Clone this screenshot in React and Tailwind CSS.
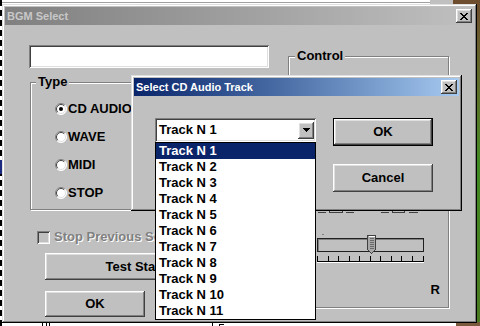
const RAISED = "bg-[#c0c0c0] shadow-[inset_-1px_-1px_#404040,inset_1px_1px_#fff,inset_-2px_-2px_#808080,inset_2px_2px_#dfdfdf]";
const FRAME = "bg-[#c0c0c0] shadow-[inset_-1px_-1px_#000,inset_1px_1px_#dfdfdf,inset_-2px_-2px_#808080,inset_2px_2px_#fff]";
const SUNKEN = "shadow-[inset_1px_1px_#808080,inset_-1px_-1px_#fff,inset_2px_2px_#404040,inset_-2px_-2px_#dfdfdf]";

function CloseBtn() {
  return (
    <div className={`w-[16px] h-[14px] flex items-center justify-center ${RAISED}`}>
      <svg width="8" height="7" viewBox="0 0 8 7" shapeRendering="crispEdges">
        <path d="M0 0h2v1h-2zM6 0h2v1h-2zM1 1h2v1h-2zM5 1h2v1h-2zM2 2h4v1h-4zM3 3h2v1h-2zM2 4h4v1h-4zM1 5h2v1h-2zM5 5h2v1h-2zM0 6h2v1h-2zM6 6h2v1h-2z" fill="#000" />
      </svg>
    </div>
  );
}

function Radio({ checked, label }) {
  return (
    <div className="flex items-center h-[14px] gap-[1px]">
      <svg width="12" height="12" viewBox="0 0 12 12">
        <circle cx="6" cy="6" r="5.5" fill="#fff" />
        <path d="M2.1 9.9 A5.5 5.5 0 0 1 9.9 2.1" stroke="#808080" fill="none" />
        <path d="M2.1 9.9 A5.5 5.5 0 0 0 9.9 2.1" stroke="#fff" fill="none" />
        <path d="M2.8 9.2 A4.5 4.5 0 0 1 9.2 2.8" stroke="#404040" fill="none" />
        <path d="M2.8 9.2 A4.5 4.5 0 0 0 9.2 2.8" stroke="#dfdfdf" fill="none" />
        {checked && <circle cx="6" cy="6" r="2" fill="#000" />}
      </svg>
      <span className="leading-[14px]">{label}</span>
    </div>
  );
}

function Ticks() {
  const xs = Array.from({ length: 11 }, (_, i) => Math.round(i * 10.55) + 0.5);
  return (
    <svg width="107" height="7" viewBox="0 0 107 7" shapeRendering="crispEdges">
      {xs.map((x) => (
        <line key={x} x1={x} y1="0" x2={x} y2="5" stroke="#000" />
      ))}
      <line x1="0" y1="5.5" x2="107" y2="5.5" stroke="#000" />
      <line x1="0" y1="6.5" x2="107" y2="6.5" stroke="#fff" />
    </svg>
  );
}

function Thumb() {
  return (
    <svg width="10" height="19" viewBox="0 0 10 19" shapeRendering="crispEdges">
      <path d="M0.5 0.5 H8.5 V14.5 L4.5 18.5 L0.5 14.5 Z" fill="#a8a8a8" stroke="#404040" />
      <path d="M1.5 1.5 H7.5" stroke="#fff" />
      {[3, 5, 7, 9, 11, 13].map((y) => (
        <line key={y} x1="3" y1={y + 0.5} x2="7" y2={y + 0.5} stroke="#6a6a6a" />
      ))}
    </svg>
  );
}

export default function App() {
  const tracks = Array.from({ length: 11 }, (_, i) => `Track N ${i + 1}`);
  return (
    <div className="relative w-[480px] h-[326px] overflow-hidden bg-white font-['Liberation_Sans',Arial,sans-serif] text-[13px] font-bold text-black">
      {/* desktop background pieces */}
      <div className="absolute left-0 top-0 w-[480px] h-[4px] flex">
        <div className="w-[430px] h-[3px] bg-white border-b border-[#a0a0a0]" />
        <div className="w-[23px] h-[4px] bg-[#c0c0c0]" />
        <div className="flex-1 h-[4px] bg-[#6e4c2e]" />
      </div>
      <div className="absolute left-0 top-0 h-[326px] w-[2px] border-l-2 border-dashed border-black" />
      <div className="absolute left-0 top-[160px] h-[14px] w-[2px] bg-[#1b2a80]" />
      <div className="absolute right-0 top-0 h-[326px] w-[3px] bg-gradient-to-b from-[#6e4c2e] via-[#3f8a22] to-[#4a7a20]" />
      <div className="absolute left-[456px] bottom-0 w-[24px] h-[4px] bg-[#7a5a3c]" />
      <div className="absolute left-[40px] bottom-0 w-[400px] h-[3px] flex items-end gap-[2px]">
        <div className="w-[1px] h-[3px] bg-black ml-[2px]" />
        <div className="w-[1px] h-[3px] bg-black ml-[1px]" />
        <div className="w-[1px] h-[3px] bg-black" />
        <div className="w-[1px] h-[3px] bg-black ml-[160px]" />
        <div className="w-[5px] h-[2px] border-t border-l border-black ml-[4px]" />
      </div>

      {/* main window */}
      <div className={`absolute left-[2px] top-[4px] w-[475px] h-[319px] p-[3px] flex flex-col ${FRAME}`}>
        <div className="h-[18px] flex items-center justify-between bg-gradient-to-r from-[#808080] to-[#c0c0c0] pl-[2px] pr-[2px]">
          <span className="text-[11px] leading-[13px] text-[#c8c8c8]">BGM Select</span>
          <CloseBtn />
        </div>
        <div className="flex items-start pl-[24px] pt-[20px] gap-[19px]">
          {/* left column */}
          <div className="w-[240px] flex flex-col">
            <div className={`h-[23px] bg-white ${SUNKEN}`} />
            <fieldset className="ml-[1px] mt-[7px] h-[135px] border border-[#808080] shadow-[inset_1px_1px_#fff,1px_1px_#fff]">
              <legend className="ml-[5px] px-[2px] leading-[14px] bg-[#c0c0c0]">Type</legend>
              <div className="flex flex-col gap-[14px] pl-[24px] pt-[13px]">
                <Radio checked label="CD AUDIO" />
                <Radio label="WAVE" />
                <Radio label="MIDI" />
                <Radio label="STOP" />
              </div>
            </fieldset>
            <div className="mt-[19px] h-[16px] flex items-center gap-[4px] ml-[8px]">
              <div className={`w-[13px] h-[13px] bg-[#c0c0c0] ${SUNKEN}`} />
              <span className="w-[101px] overflow-hidden whitespace-nowrap text-[#808080] [text-shadow:1px_1px_#fff] leading-[16px]">Stop Previous Song</span>
            </div>
            <div className={`mt-[8px] ml-[16px] w-[180px] h-[27px] flex items-center justify-center ${RAISED}`}>
              Test Start
            </div>
            <div className={`mt-[11px] ml-[16px] w-[100px] h-[26px] flex items-center justify-center ${RAISED}`}>
              OK
            </div>
          </div>

          {/* right column */}
          <fieldset className="mt-[4px] w-[161px] h-[259px] border border-[#808080] shadow-[inset_1px_1px_#fff,1px_1px_#fff] flex flex-col">
            <legend className="ml-[6px] px-[2px] leading-[14px] bg-[#c0c0c0]">Control</legend>
            <div className="mt-[143px] ml-[29px] h-[8px] flex items-end">
              <div className="w-[8px] h-[1px] bg-[#404040] mb-[1px]" />
              <div className="ml-[3px] w-[14px] h-[4px] border-l border-r border-b border-[#404040] mb-[1px]" />
              <div className="ml-[3px] w-[8px] h-[1px] bg-[#404040] mb-[1px]" />
              <div className="ml-[27px] w-[8px] h-[1px] bg-[#404040] mb-[1px]" />
              <div className="ml-[3px] w-[13px] h-[4px] border-l border-r border-b border-[#404040] mb-[1px]" />
              <div className="ml-[4px] w-[9px] h-[1px] bg-[#404040] mb-[1px]" />
            </div>
            <div className="relative mt-[20px] ml-[28px] w-[107px] h-[29px]">
              <div className="absolute left-[5px] top-0 w-[2px] h-[1px] bg-[#808080]" />
              <div className="absolute left-0 top-[4px] w-[107px] h-[14px] border border-[#202020] shadow-[inset_1px_1px_#808080]" />
              <div className="absolute left-[50px] top-[1px]">
                <Thumb />
              </div>
              <div className="absolute left-0 top-[22px]">
                <Ticks />
              </div>
            </div>
            <div className="mt-[19px] self-end mr-[8px] leading-[15px]">R</div>
          </fieldset>
        </div>
      </div>

      {/* Select CD Audio Track dialog */}
      <div className={`absolute left-[131px] top-[75px] w-[331px] h-[136px] p-[3px] flex flex-col ${FRAME}`}>
        <div className="h-[18px] flex items-center justify-between bg-gradient-to-r from-[#0a246a] to-[#a6caf0] pl-[2px] pr-[2px]">
          <span className="text-[11px] leading-[13px] text-white">Select CD Audio Track</span>
          <CloseBtn />
        </div>
        <div className="flex items-start pl-[21px] pt-[22px]">
          <div className={`w-[161px] h-[24px] bg-white p-[2px] flex items-center ${SUNKEN}`}>
            <span className="flex-1 pl-[2px] leading-[16px]">Track N 1</span>
            <div className={`w-[16px] h-[17px] flex items-center justify-center ${RAISED}`}>
              <svg width="7" height="4" viewBox="0 0 7 4" shapeRendering="crispEdges">
                <path d="M0 0h7v1h-7zM1 1h5v1h-5zM2 2h3v1h-3zM3 3h1v1h-1z" fill="#000" />
              </svg>
            </div>
          </div>
          <div className="ml-[17px] flex flex-col gap-[18px]">
            <div className="w-[100px] h-[28px] border border-black">
              <div className={`w-full h-full flex items-center justify-center ${RAISED}`}>OK</div>
            </div>
            <div className={`w-[100px] h-[28px] flex items-center justify-center ${RAISED}`}>Cancel</div>
          </div>
        </div>
      </div>

      {/* dropdown list */}
      <div className="absolute left-[155px] top-[142px] w-[161px] h-[178px] border border-black bg-white flex flex-col">
        {tracks.map((t, i) => (
          <div
            key={t}
            className={`h-[16px] leading-[16px] pl-[3px] ${i === 0 ? "bg-[#0a246a] text-white" : "text-black"}`}
          >
            {t}
          </div>
        ))}
      </div>
    </div>
  );
}
